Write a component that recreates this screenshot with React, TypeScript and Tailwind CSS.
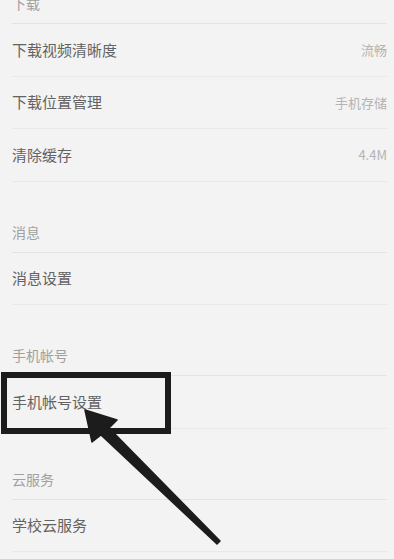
const sections: { title: string; first?: boolean; rows: { label: string; value?: string }[] }[] = [
  {
    title: '下载',
    first: true,
    rows: [
      { label: '下载视频清晰度', value: '流畅' },
      { label: '下载位置管理', value: '手机存储' },
      { label: '清除缓存', value: '4.4M' },
    ],
  },
  { title: '消息', rows: [{ label: '消息设置' }] },
  { title: '手机帐号', rows: [{ label: '手机帐号设置' }] },
  { title: '云服务', rows: [{ label: '学校云服务' }] },
]

function App() {
  return (
    <div
      className="relative h-[559px] overflow-hidden bg-[#f3f3f3] pl-3 pr-[7px]"
      style={{ fontFamily: '"Noto Sans CJK SC", "Noto Sans", sans-serif' }}
    >
      {sections.map((s) => (
        <div key={s.title}>
          <div
            className={`flex items-end border-b border-[#e3e3e3] pb-[10px] text-[14px] leading-5 text-[#a0a0a0] ${
              s.first ? 'h-[24px]' : 'h-[71px]'
            }`}
          >
            {s.title}
          </div>
          {s.rows.map((r) => (
            <div
              key={r.label}
              className="flex h-[52.5px] items-center justify-between border-b border-[#e8e8e8] text-[15px] text-[#636363]"
            >
              <span>{r.label}</span>
              {r.value && <span className="text-[13px] text-[#b4b4b4]">{r.value}</span>}
            </div>
          ))}
        </div>
      ))}

      {/* annotation overlay */}
      <div className="absolute left-[1px] top-[372px] h-[62px] w-[170px] border-[6px] border-[#1c1c1c]" />
      <svg className="absolute left-0 top-0" width="394" height="559" viewBox="0 0 394 559">
        <polygon
          points="85,410 117,420 109,428 220,541 217,544 101,435 92,442"
          fill="#1c1c1c"
          stroke="#1c1c1c"
          strokeWidth="1.5"
          strokeLinejoin="round"
        />
      </svg>
    </div>
  )
}

export default App
